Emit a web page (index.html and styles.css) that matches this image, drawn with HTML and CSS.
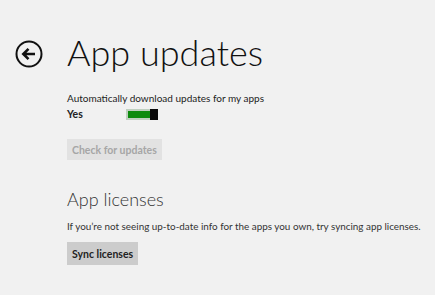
FILE: index.html
```html
<!DOCTYPE html>
<html lang="en">
<head>
  <meta charset="UTF-8">
  <title>App updates</title>
  <link rel="stylesheet" href="styles.css">
</head>
<body>
  <div class="page">
    <div class="header">
      <button class="back" aria-label="Back">
        <svg width="28" height="28" viewBox="0 0 28 28">
          <circle cx="14" cy="14" r="12.5" fill="none" stroke="#111" stroke-width="2"/>
          <path d="M20 14H8.5M13.5 8.8L8.3 14l5.2 5.2" fill="none" stroke="#111" stroke-width="2.6"/>
        </svg>
      </button>
      <h1>App updates</h1>
    </div>

    <div class="content">
      <div class="setting">
        <div class="setting-label">Automatically download updates for my apps</div>
        <div class="toggle-row">
          <span class="toggle-value">Yes</span>
          <span class="toggle" role="switch" aria-checked="true">
            <span class="toggle-track"></span>
            <span class="toggle-thumb"></span>
          </span>
        </div>
      </div>

      <button class="btn" disabled>Check for updates</button>

      <h2>App licenses</h2>
      <p class="note">If you’re not seeing up-to-date info for the apps you own, try syncing app licenses.</p>
      <button class="btn">Sync licenses</button>
    </div>
  </div>
</body>
</html>
```

FILE: styles.css
```css
body {
  margin: 0;
  background-color: #f1f1f1;
  font-family: Lato, "Open Sans", sans-serif;
  color: #222;
}

.page {
  padding: 30px 0 0 15px;
}

.header {
  display: flex;
  align-items: center;
  gap: 24px;
}

.back {
  width: 28px;
  height: 28px;
  padding: 0;
  border: none;
  background: none;
  display: flex;
  margin-top: 4px;
}

h1 {
  margin: 0;
  font-weight: 300;
  font-size: 36px;
  line-height: 44px;
  color: #111;
}

.content {
  padding-left: 52px;
  display: flex;
  flex-direction: column;
  align-items: flex-start;
}

.setting {
  margin-top: 17px;
}

.setting-label {
  font-size: 10px;
  line-height: 14px;
}

.toggle-row {
  display: flex;
  align-items: center;
  margin-top: 3px;
}

.toggle-value {
  width: 59px;
  font-size: 10.5px;
  font-weight: 700;
}

.toggle {
  display: flex;
  height: 11px;
  width: 32px;
}

.toggle-track {
  flex: 1;
  background-color: #0c8a0c;
  border: 2px solid #bfcfbf;
  border-right: none;
}

.toggle-thumb {
  width: 8px;
  background-color: #0a0a0a;
}

.btn {
  height: 23px;
  padding: 0 5px;
  border: none;
  background-color: #cccccc;
  font-family: inherit;
  font-size: 10.5px;
  font-weight: 700;
  color: #222;
}

.btn:disabled {
  height: 21px;
  margin-top: 19px;
  background-color: #e2e2e2;
  color: #a6a6a6;
}

h2 {
  margin: 27px 0 0;
  font-weight: 300;
  font-size: 18px;
  line-height: 24px;
  color: #333;
}

.note {
  margin: 8px 0 9px;
  font-size: 9.9px;
  line-height: 14px;
  color: #333;
  white-space: nowrap;
}
```
